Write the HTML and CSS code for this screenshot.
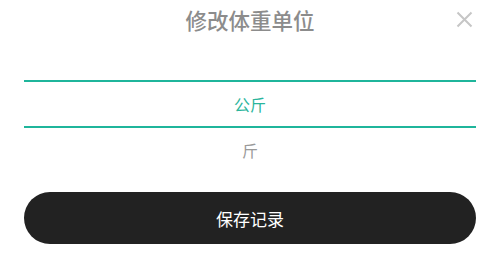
FILE: index.html
```html
<!DOCTYPE html>
<html lang="zh-CN">
<head>
    <meta charset="UTF-8">
    <meta name="viewport" content="width=device-width, initial-scale=1.0">
    <title>修改体重单位</title>
    <link rel="stylesheet" href="styles.css">
</head>
<body>
    <div class="sheet">
        <div class="header">
            <h1 class="title">修改体重单位</h1>
            <button class="close" aria-label="关闭">
                <svg width="17" height="17" viewBox="0 0 17 17">
                    <path d="M1.5 1.5 L15.5 15.5 M15.5 1.5 L1.5 15.5" stroke="#c6c6c6" stroke-width="2" fill="none"/>
                </svg>
            </button>
        </div>
        <div class="picker">
            <div class="option selected">公斤</div>
            <div class="option">斤</div>
        </div>
        <button class="save">保存记录</button>
    </div>
</body>
</html>
```

FILE: styles.css
```css
body {
    margin: 0;
    background-color: #fff;
    font-family: "Noto Sans CJK SC", "Noto Sans", sans-serif;
}

.sheet {
    padding: 0 24px;
}

.header {
    position: relative;
    height: 40px;
    display: flex;
    justify-content: center;
    align-items: center;
}

.title {
    margin: 0;
    font-size: 21.5px;
    font-weight: 500;
    color: #8c8c8c;
    line-height: 38px;
}

.close {
    position: absolute;
    right: 3px;
    top: 11px;
    padding: 0;
    border: none;
    background: none;
    display: flex;
}

.picker {
    margin-top: 40px;
}

.option {
    height: 44px;
    display: flex;
    justify-content: center;
    align-items: center;
    font-size: 16px;
    color: #9a9a9a;
}

.option.selected {
    border-top: 2px solid #1fb59b;
    border-bottom: 2px solid #1fb59b;
    color: #2bb59c;
}

.save {
    display: block;
    width: 100%;
    height: 52px;
    margin-top: 20px;
    border: none;
    border-radius: 26px;
    background-color: #222;
    color: #fff;
    font-family: inherit;
    font-size: 17px;
}
```
